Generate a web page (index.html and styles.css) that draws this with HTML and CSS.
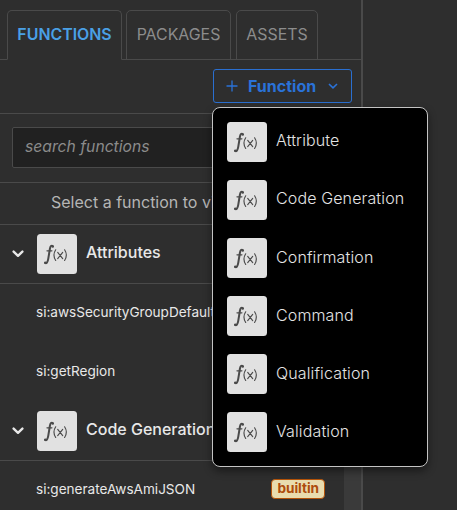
FILE: index.html
```html
<!DOCTYPE html>
<html lang="en">
<head>
<meta charset="utf-8">
<title>Functions</title>
<link rel="stylesheet" href="styles.css">
</head>
<body>
<svg class="defs" width="0" height="0">
  <symbol id="fx" viewBox="0 0 40 40">
    <rect width="40" height="40" rx="3.5" fill="#e1e1e1"/>
    <g fill="none" stroke="#4a4a4a" stroke-linecap="round">
      <path d="M16 12.2C14.4 11 13.4 12.2 12.9 14.8L11.2 25.2C10.7 28.2 9.4 29.8 8 29" stroke-width="2"/>
      <path d="M10 16.8H14.9" stroke-width="1.3"/>
      <path d="M18.7 15.8Q15.2 21.1 18.7 26.5M27.6 15.8Q31.1 21.1 27.6 26.5M20.7 18.4L25.7 24.6M25.7 18.4L20.7 24.6" stroke-width="1.15"/>
    </g>
    <circle cx="15.8" cy="12.7" r="1.1" fill="#4a4a4a"/>
    <circle cx="8.3" cy="28.6" r="1.2" fill="#4a4a4a"/>
  </symbol>
  <symbol id="chevron" viewBox="0 0 12 8">
    <path d="M1.6 1.6L6 5.8L10.4 1.6" fill="none" stroke="currentColor" stroke-width="2.4" stroke-linecap="round" stroke-linejoin="round"/>
  </symbol>
</svg>
<div class="panel">
  <nav class="tabs">
    <a class="tab tab-active">FUNCTIONS</a>
    <a class="tab tab-packages">PACKAGES</a>
    <a class="tab tab-assets">ASSETS</a>
  </nav>
  <div class="toolbar">
    <button class="create">
      <svg class="plus" viewBox="0 0 12 12"><path d="M6 .5V11.5M.5 6H11.5" stroke="currentColor" stroke-width="1.3"/></svg>
      <span class="create-label">Function</span>
      <svg class="caret" viewBox="0 0 10 6"><path d="M1 1L5 4.8L9 1" fill="none" stroke="currentColor" stroke-width="1.6"/></svg>
    </button>
    <div class="menu">
      <div class="item"><svg class="icon"><use href="#fx"/></svg><span>Attribute</span></div>
      <div class="item"><svg class="icon"><use href="#fx"/></svg><span>Code Generation</span></div>
      <div class="item"><svg class="icon"><use href="#fx"/></svg><span>Confirmation</span></div>
      <div class="item"><svg class="icon"><use href="#fx"/></svg><span>Command</span></div>
      <div class="item"><svg class="icon"><use href="#fx"/></svg><span>Qualification</span></div>
      <div class="item"><svg class="icon"><use href="#fx"/></svg><span>Validation</span></div>
    </div>
  </div>
  <div class="search"><div class="field">search functions</div></div>
  <div class="hint">Select a function to view</div>
  <div class="list">
    <div class="group"><svg class="chevron"><use href="#chevron"/></svg><svg class="icon"><use href="#fx"/></svg><span>Attributes</span></div>
    <div class="row"><span>si:awsSecurityGroupDefault</span></div>
    <div class="row"><span>si:getRegion</span></div>
    <div class="group"><svg class="chevron"><use href="#chevron"/></svg><svg class="icon"><use href="#fx"/></svg><span>Code Generation</span></div>
    <div class="row"><span>si:generateAwsAmiJSON</span><span class="badge">builtin</span></div>
  </div>
</div>
</body>
</html>
```
FILE: styles.css
```css
* { box-sizing: border-box; }
body {
  margin: 0;
  height: 510px;
  overflow: hidden;
  background: #2e2e2e;
  color: #e8e8e8;
  font-family: Inter, sans-serif;
  font-size: 16px;
}
.defs { position: absolute; }
.panel {
  display: flex;
  flex-direction: column;
  width: 363px;
  height: 510px;
  border-right: 2px solid #4a4a4a;
}
.tabs {
  display: flex;
  flex: none;
  height: 60px;
  padding: 10px 0 0 7px;
  box-shadow: inset 0 -1px #4a4a4a;
}
.tab {
  display: flex;
  align-items: center;
  justify-content: center;
  height: 50px;
  margin-right: 4px;
  padding-bottom: 2px;
  border: 1px solid #4a4a4a;
  border-radius: 5px 5px 0 0;
  color: #8c8c8c;
  font-size: 15.9px;
}
.tab-active {
  width: 115px;
  border-bottom-color: #2e2e2e;
  color: #4aa0e6;
  font-weight: 600;
}
.tab-packages { width: 105px; margin-right: 5px; }
.tab-assets { width: 82px; }
.toolbar {
  position: relative;
  display: flex;
  flex: none;
  justify-content: flex-end;
  height: 54px;
  padding: 9px 9px 0 0;
  border-bottom: 1px solid #4a4a4a;
}
.create {
  display: flex;
  align-items: center;
  width: 139px;
  height: 34px;
  padding: 0 13px 0 12px;
  border: 1px solid #2a6fd0;
  border-radius: 3px;
  background: none;
  color: #2a72d8;
  font: 700 16px Inter, sans-serif;
}
.plus { width: 12px; height: 12px; margin-right: 10px; }
.create-label { flex: 1; text-align: left; }
.caret { width: 10px; height: 6px; }
.menu {
  position: absolute;
  z-index: 2;
  top: 47px;
  left: 212px;
  width: 216px;
  height: 360px;
  padding: 5px 14px;
  border: 1px solid #c4c4c4;
  border-radius: 8px;
  background: #000;
  box-shadow: 0 4px 8px rgba(0, 0, 0, .45);
}
.item {
  display: flex;
  align-items: center;
  height: 58px;
  gap: 9px;
  color: #e4e4e4;
  font-weight: 350;
  letter-spacing: .13px;
  white-space: nowrap;
}
.item span { margin-top: -4px; }
.item:nth-child(n + 3) span { margin-top: -2px; }
.icon { flex: none; width: 40px; height: 40px; }
.search {
  flex: none;
  height: 69px;
  padding: 13px 9px 0 12px;
  border-bottom: 1px solid #4a4a4a;
}
.field {
  height: 41px;
  padding-left: 12px;
  border: 1px solid #4a4a4a;
  border-radius: 2px;
  background: #212121;
  color: #8b8b8b;
  font-size: 15.7px;
  font-style: italic;
  line-height: 37px;
}
.hint {
  flex: none;
  height: 42px;
  border-bottom: 1px solid #4a4a4a;
  color: #b5b5b5;
  line-height: 39px;
  padding-left: 51px;
}
.list {
  flex: 1;
  min-height: 0;
  overflow: hidden;
  border-right: 17px solid #3a3a3a;
}
.group {
  display: flex;
  align-items: center;
  height: 59px;
  padding-left: 12px;
  border-bottom: 1px solid #4a4a4a;
  font-weight: 500;
  white-space: nowrap;
}
.group .icon { margin: 0 9px 0 13px; }
.group span { margin-top: -4px; }
.chevron { width: 12px; height: 8px; }
.row {
  display: flex;
  align-items: center;
  justify-content: space-between;
  height: 59px;
  padding: 0 19px 3px 36px;
  font-size: 13.6px;
  letter-spacing: -.02px;
  white-space: nowrap;
}
.badge {
  height: 20px;
  padding: 0 5px;
  border: 1px solid #b45309;
  border-radius: 4px;
  background: #e9dcae;
  color: #ad4c0c;
  font-weight: 700;
  line-height: 17px;
}
```
